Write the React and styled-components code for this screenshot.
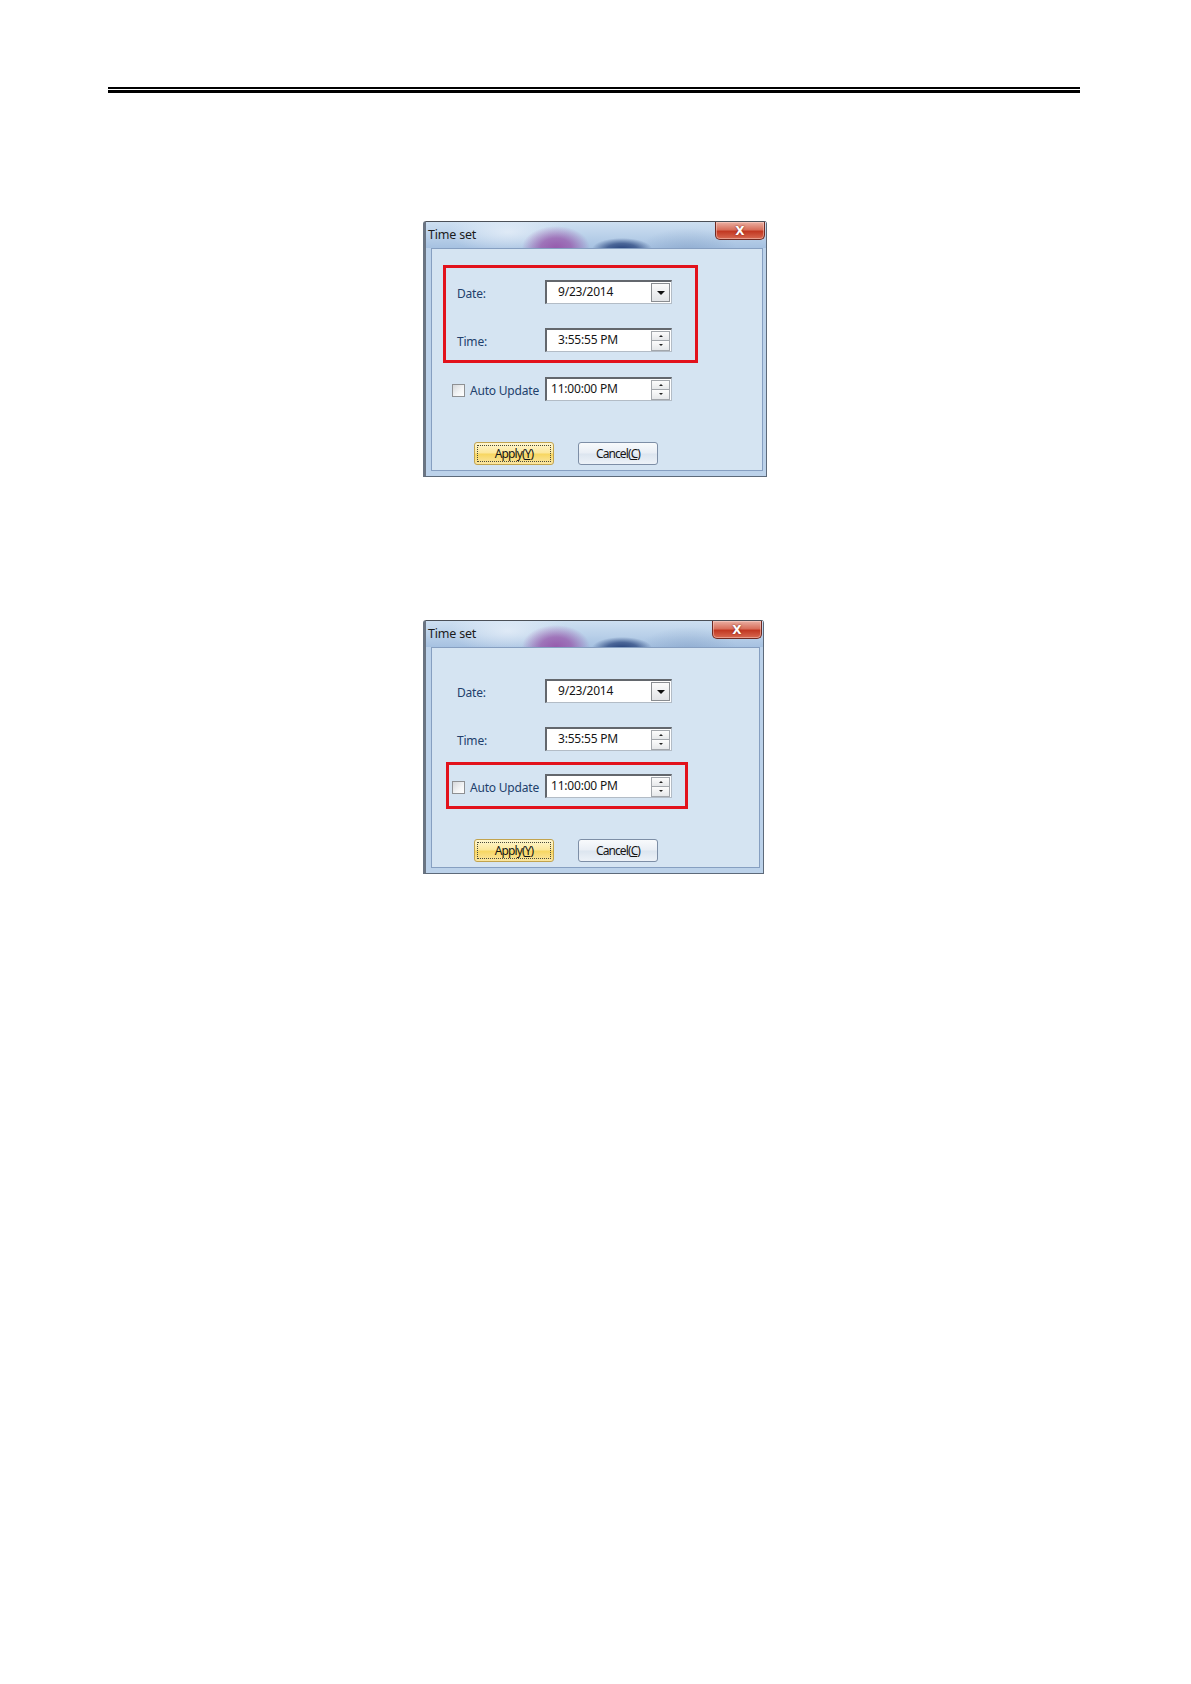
import React from "react";
import styled, { createGlobalStyle } from "styled-components";

const GlobalStyle = createGlobalStyle`
  html, body {
    margin: 0;
    padding: 0;
    background: #ffffff;
  }
  body {
    font-family: "Noto Sans", "DejaVu Sans", sans-serif;
  }
`;

const Page = styled.div`
  width: 1191px;
  min-height: 1684px;
  padding-top: 87px;
  box-sizing: border-box;
  background: #fff;
`;

const Rule = styled.div`
  margin-left: 108px;
  width: 972px;
  height: 1px;
  border-top: 2px solid #000;
  border-bottom: 3px solid #000;
`;

const Figure = styled.div`
  margin-top: ${({ $top }) => $top}px;
  margin-left: 423px;
`;

const Window = styled.div`
  width: ${({ $w }) => $w}px;
  box-sizing: border-box;
  border: 1px solid #5d6a7a;
  border-left: 3px solid #6a7482;
  border-top-color: #4b5058;
  border-radius: 3px 3px 0 0;
  background: #bcd2ea;
`;

const TitleBar = styled.div`
  height: 26px;
  display: flex;
  justify-content: space-between;
  align-items: flex-start;
  background:
    radial-gradient(ellipse 34px 22px at 130px 26px, rgba(150, 86, 170, 0.95) 0%, rgba(150, 86, 170, 0.75) 45%, rgba(150, 86, 170, 0) 100%),
    radial-gradient(ellipse 30px 11px at 196px 27px, rgba(34, 62, 120, 0.95) 0%, rgba(34, 62, 120, 0.7) 50%, rgba(34, 62, 120, 0) 100%),
    radial-gradient(ellipse 60px 22px at 82px 10px, rgba(236, 243, 251, 0.7), rgba(236, 243, 251, 0) 100%),
    radial-gradient(ellipse 50px 24px at 262px 30px, rgba(120, 150, 190, 0.45), rgba(120, 150, 190, 0) 100%),
    linear-gradient(180deg, #cddff1 0%, #b9d0e9 55%, #a6c1e1 100%);
`;

const Title = styled.span`
  padding-left: 2px;
  line-height: 26px;
  font-size: 12.5px;
  color: #1b1b1b;
  letter-spacing: -0.2px;
`;

const CloseButton = styled.div`
  width: 50px;
  height: 18px;
  margin-right: 1px;
  box-sizing: border-box;
  border: 1px solid #6f2a22;
  border-top: none;
  border-radius: 0 0 5px 5px;
  background: linear-gradient(180deg, #eab0a3 0%, #d8705c 45%, #c23822 55%, #d86a52 100%);
  box-shadow: inset 0 0 0 1px rgba(255, 220, 210, 0.45);
  display: flex;
  align-items: center;
  justify-content: center;
  color: #fff;
  font-family: "DejaVu Sans", sans-serif;
  font-weight: bold;
  font-size: 12px;
  line-height: 1;
  text-shadow: 0 0 2px #7a1a10;
`;

const Frame = styled.div`
  padding: 0 3px 5px 5px;
`;

const Body = styled.div`
  border: 1px solid #869fc1;
  background: #d5e4f2;
  padding: 16px 0 5px;
`;

const Group = styled.div`
  margin-left: ${({ $left }) => $left}px;
  margin-top: ${({ $mt }) => $mt || 0}px;
  width: ${({ $w }) => $w}px;
  box-sizing: border-box;
  border: 3px solid ${({ $hl }) => ($hl ? "#e2121c" : "transparent")};
  padding: ${({ $pad }) => $pad};
  display: flex;
  flex-direction: column;
  gap: 24px;
`;

const Row = styled.div`
  height: 24px;
  display: flex;
  align-items: center;
`;

const Label = styled.span`
  width: ${({ $w }) => $w}px;
  flex-shrink: 0;
  font-size: 12px;
  color: #223f6c;
  letter-spacing: -0.2px;
  padding-top: 2px;
`;

const Check = styled.span`
  width: 13px;
  height: 13px;
  box-sizing: border-box;
  flex-shrink: 0;
  margin-right: 5px;
  margin-top: 2px;
  border: 1px solid #8e9093;
  background: linear-gradient(135deg, #d6d8db 0%, #f4f5f6 60%, #ffffff 100%);
`;

const Field = styled.div`
  width: 127px;
  height: 24px;
  box-sizing: border-box;
  display: flex;
  align-items: center;
  justify-content: space-between;
  background: #fff;
  border: 1px solid #b3bcc6;
  border-top: 2px solid #63676d;
  border-left: 2px solid #63676d;
  padding-left: ${({ $pad }) => $pad}px;
  font-size: 12px;
  color: #151515;
  letter-spacing: -0.2px;
`;

const FieldText = styled.span`
  margin-top: -3px;
`;

const DropButton = styled.div`
  width: 19px;
  height: 19px;
  box-sizing: border-box;
  margin-right: 1px;
  border: 1px solid #8a8d91;
  background: linear-gradient(180deg, #fbfbfb, #e2e4e7);
  display: flex;
  align-items: center;
  justify-content: center;
  &::after {
    content: "";
    border-left: 4px solid transparent;
    border-right: 4px solid transparent;
    border-top: 4px solid #111;
  }
`;

const Spin = styled.div`
  width: 19px;
  height: 20px;
  margin-right: 1px;
  display: flex;
  flex-direction: column;
`;

const SpinPart = styled.div`
  flex: 1;
  box-sizing: border-box;
  border: 1px solid #a3a7ac;
  border-top-width: ${({ $down }) => ($down ? 0 : 1)}px;
  background: linear-gradient(180deg, #fcfcfc, #e6e8ea);
  display: flex;
  align-items: center;
  justify-content: center;
  &::after {
    content: "";
    border-left: 2px solid transparent;
    border-right: 2px solid transparent;
    ${({ $down }) =>
      $down ? "border-top: 2px solid #222;" : "border-bottom: 2px solid #222;"}
  }
`;

const Buttons = styled.div`
  margin: 30px 0 0 42px;
  display: flex;
  gap: 24px;
`;

const Button = styled.div`
  position: relative;
  width: 80px;
  height: 23px;
  box-sizing: border-box;
  border: 1px solid ${({ $primary }) => ($primary ? "#c2a34e" : "#7d8ea6")};
  border-radius: 3px;
  background: ${({ $primary }) =>
    $primary
      ? "linear-gradient(180deg, #fff6cf 0%, #fce79a 48%, #f7d660 52%, #fbe6a2 100%)"
      : "linear-gradient(180deg, #f8fafc 0%, #e9eef5 48%, #dce5ef 52%, #edf2f8 100%)"};
  display: flex;
  align-items: center;
  justify-content: center;
  font-size: 12px;
  letter-spacing: -0.9px;
  color: #151515;
  &::after {
    content: "";
    display: ${({ $primary }) => ($primary ? "block" : "none")};
    position: absolute;
    inset: 2px;
    border: 1px dotted #4a4a3a;
  }
`;

const Key = styled.span`
  text-decoration: underline;
`;

function Spinner() {
  return (
    <Spin>
      <SpinPart />
      <SpinPart $down />
    </Spin>
  );
}

function TimeDialog({ width, highlight, autoTop }) {
  return (
    <Window $w={width}>
      <TitleBar>
        <Title>Time set</Title>
        <CloseButton>X</CloseButton>
      </TitleBar>
      <Frame>
        <Body>
          <Group $left={11} $w={255} $pad="12px 0 8px 11px" $hl={highlight === "date"}>
            <Row>
              <Label $w={88}>Date:</Label>
              <Field $pad={11}>
                <FieldText>9/23/2014</FieldText>
                <DropButton />
              </Field>
            </Row>
            <Row>
              <Label $w={88}>Time:</Label>
              <Field $pad={11}>
                <FieldText>3:55:55 PM</FieldText>
                <Spinner />
              </Field>
            </Row>
          </Group>
          <Group $left={14} $w={242} $mt={autoTop} $pad="9px 0 8px 3px" $hl={highlight === "auto"}>
            <Row>
              <Check />
              <Label $w={75}>Auto Update</Label>
              <Field $pad={4}>
                <FieldText>11:00:00 PM</FieldText>
                <Spinner />
              </Field>
            </Row>
          </Group>
          <Buttons>
            <Button $primary>
              Apply(<Key>Y</Key>)
            </Button>
            <Button>
              Cancel(<Key>C</Key>)
            </Button>
          </Buttons>
        </Body>
      </Frame>
    </Window>
  );
}

export default function App() {
  return (
    <>
      <GlobalStyle />
      <Page>
        <Rule />
        <Figure $top={128}>
          <TimeDialog width={344} highlight="date" autoTop={2} />
        </Figure>
        <Figure $top={143}>
          <TimeDialog width={341} highlight="auto" autoTop={0} />
        </Figure>
      </Page>
    </>
  );
}
